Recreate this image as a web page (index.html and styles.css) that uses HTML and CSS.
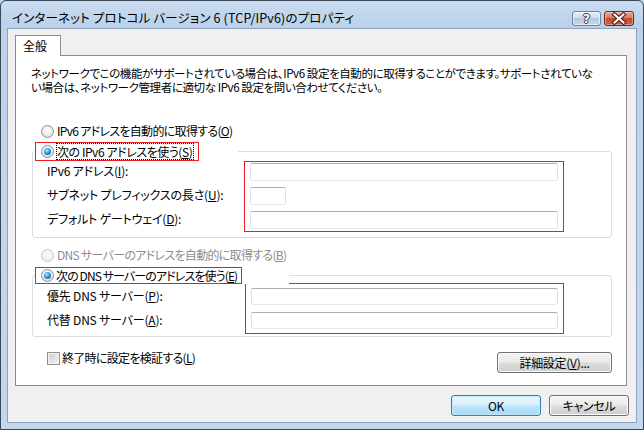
FILE: index.html
```html
<!DOCTYPE html>
<html lang="ja">
<head>
<meta charset="utf-8">
<title>IPv6 プロパティ</title>
<link rel="stylesheet" href="styles.css">
</head>
<body>
<div class="window">
  <div class="titlebar">
    <span class="title">インターネット プロトコル バージョン 6 (TCP/IPv6)のプロパティ</span>
    <div class="caption-btns">
      <div class="cbtn help"><span class="qmark">?</span></div>
      <div class="cbtn close">
        <svg width="28" height="13" viewBox="0 0 28 13">
          <path d="M9.5 2.5 L18.5 10.5 M18.5 2.5 L9.5 10.5" stroke="#4a1a12" stroke-width="4.2" stroke-linecap="square" fill="none"/>
          <path d="M9.5 2.5 L18.5 10.5 M18.5 2.5 L9.5 10.5" stroke="#ffffff" stroke-width="2.2" stroke-linecap="square" fill="none"/>
        </svg>
      </div>
    </div>
  </div>
  <div class="client">
    <div class="tabs"><div class="tab">全般</div></div>
    <div class="panel">
      <div class="desc">
        <div class="dline">ネットワークでこの機能がサポートされている場合は、IPv6 設定を自動的に取得することができます。サポートされていな</div>
        <div class="dline">い場合は、ネットワーク管理者に適切な IPv6 設定を問い合わせてください。</div>
      </div>

      <div class="radio-row"><span class="radio"></span><span class="rtext">IPv6 アドレスを自動的に取得する(<u>O</u>)</span></div>

      <div class="group g1">
        <div class="legend lg1"><span class="hl hl1"><span class="radio on"></span><span class="focus">次の IPv6 アドレスを使う(<u>S</u>)</span></span></div>
        <div class="grow">
          <div class="labels l1">
            <div class="lab">IPv6 アドレス(<u>I</u>):</div>
            <div class="lab">サブネット プレフィックスの長さ(<u>U</u>):</div>
            <div class="lab">デフォルト ゲートウェイ(<u>D</u>):</div>
          </div>
          <div class="redbox rb1">
            <div class="input wide"></div>
            <div class="input small"></div>
            <div class="input wide"></div>
          </div>
        </div>
      </div>

      <div class="radio-row dns-auto disabled"><span class="radio dis"></span><span class="rtext">DNS サーバーのアドレスを自動的に取得する(<u>B</u>)</span></div>

      <div class="group g2">
        <div class="legend lg2"><span class="hl hl2"><span class="radio on"></span><span class="rtext">次の DNS サーバーのアドレスを使う(<u>E</u>)</span></span></div>
        <div class="grow">
          <div class="labels l2">
            <div class="lab">優先 DNS サーバー(<u>P</u>):</div>
            <div class="lab">代替 DNS サーバー(<u>A</u>):</div>
          </div>
          <div class="redbox rb2">
            <div class="input wide2"></div>
            <div class="input wide2"></div>
          </div>
        </div>
      </div>

      <div class="bottom-row">
        <div class="check-wrap"><span class="checkbox"></span><span class="rtext">終了時に設定を検証する(<u>L</u>)</span></div>
        <button class="btn adv">詳細設定(<u>V</u>)...</button>
      </div>
    </div>
    <div class="footer">
      <button class="btn ok">OK</button>
      <button class="btn cancel">キャンセル</button>
    </div>
  </div>
</div>
</body>
</html>
```

FILE: styles.css
```css
html, body {
  margin: 0;
  padding: 0;
}
body {
  width: 644px;
  height: 430px;
  overflow: hidden;
  background: #bfd5ec;
  font-family: "Noto Sans CJK JP", "Noto Sans", sans-serif;
  font-size: 12px;
  color: #000;
  font-feature-settings: "palt" 1;
}
u { text-decoration: underline; text-underline-offset: 1px; }

.window {
  box-sizing: border-box;
  width: 644px;
  height: 430px;
  border: 1px solid #3b4656;
  border-radius: 6px 6px 0 0;
  background: linear-gradient(#c9dcf0 0px, #bad0e9 28px, #bdd4ec 40px, #c3d8ee 100%);
  display: flex;
  flex-direction: column;
}

.titlebar {
  height: 28px;
  display: flex;
  justify-content: space-between;
  align-items: flex-start;
  padding: 0 9px 0 11px;
}
.title {
  font-size: 12.5px;
  line-height: 16px;
  margin-top: 9px;
  color: #000;
  letter-spacing: 0.15px;
}
.caption-btns {
  display: flex;
  gap: 3px;
  margin-top: 10px;
}
.cbtn {
  box-sizing: border-box;
  height: 15px;
  border-radius: 3px;
  display: flex;
  align-items: center;
  justify-content: center;
}
.help {
  width: 29px;
  border: 1px solid #6f829c;
  background: linear-gradient(#e6eef8 0%, #cfdcec 45%, #b6c8de 50%, #c8d7ea 100%);
  box-shadow: inset 0 0 0 1px rgba(255,255,255,0.55);
}
.qmark {
  font-family: "DejaVu Sans", sans-serif;
  font-weight: bold;
  font-size: 12px;
  line-height: 12px;
  color: #fff;
  text-shadow: 1px 0 0 #2d3e55, -1px 0 0 #2d3e55, 0 1px 0 #2d3e55, 0 -1px 0 #2d3e55;
}
.close {
  width: 30px;
  border: 1px solid #6d2a1e;
  background: linear-gradient(#e9a898 0%, #d97a63 45%, #c44a2c 50%, #d0604a 100%);
  box-shadow: inset 0 0 0 1px rgba(255,220,210,0.45);
}
.close svg { display: block; }

.client {
  flex: 1;
  margin: 0 6px 6px 6px;
  border: 1px solid #8ea4bd;
  background: #f0f0f0;
  display: flex;
  flex-direction: column;
}

.tabs {
  display: flex;
  padding: 6px 0 0 7px;
}
.tab {
  position: relative;
  z-index: 1;
  box-sizing: border-box;
  width: 46px;
  height: 21px;
  margin-bottom: -1px;
  border: 1px solid #898c95;
  border-bottom: none;
  background: #fff;
  padding-left: 7px;
  line-height: 19px;
  font-size: 12px;
}

.panel {
  box-sizing: border-box;
  height: 331px;
  margin: 0 9px 0 7px;
  border: 1px solid #898c95;
  background: #fff;
  display: flex;
  flex-direction: column;
}

.desc {
  margin: 10px 0 0 15px;
  font-size: 11.5px;
  letter-spacing: -0.4px;
  white-space: nowrap;
}
.dline {
  height: 14px;
  line-height: 14px;
}

.radio-row {
  display: flex;
  align-items: center;
  height: 18px;
  margin-top: 28px;
  padding-left: 25px;
}
.radio-row .rtext { margin-left: 3px; }
.dns-auto { margin-top: 8px; }
.disabled .rtext { color: #8d8d8d; }

.rtext {
  line-height: 16px;
  white-space: nowrap;
  letter-spacing: -0.7px;
}

.radio {
  position: relative;
  flex: none;
  box-sizing: border-box;
  width: 13px;
  height: 13px;
  border-radius: 50%;
  border: 1px solid #8f8f8f;
  background: radial-gradient(circle at 50% 40%, #ffffff 0%, #f0f0f0 45%, #cfcfcf 100%);
}
.radio.on::after {
  content: "";
  position: absolute;
  left: 2px;
  top: 2px;
  width: 7px;
  height: 7px;
  border-radius: 50%;
  background: radial-gradient(circle at 40% 35%, #b9ecff 0%, #2a98e0 45%, #0c4f93 100%);
}
.radio.dis {
  border-color: #c4c4c4;
  background: radial-gradient(circle at 50% 40%, #fafafa, #ececec);
}

/* group box: the radio "legend" sits over the top border line */
.group {
  position: relative;
  margin: 0 14px 0 16px;
  border: 1px solid #d5dfe5;
  border-radius: 3px;
}
.g1 { margin-top: 11px; padding-bottom: 4px; }
.g2 { margin-top: 11px; padding-bottom: 2px; }

.legend {
  position: relative;
  z-index: 1;
  background: #fff;
  margin-left: 2px;
}
.lg1 { width: 203px; margin-top: -10px; }
.lg2 { width: 254px; margin-top: -9px; }

.hl {
  box-sizing: border-box;
  display: flex;
  align-items: center;
  border: 1px solid #ed1c24;
  padding-left: 5px;
  background: #fff;
}
.hl .rtext, .hl .focus { margin-left: 2px; }
.hl2 .rtext { letter-spacing: -0.9px; }
.hl1 { width: 164px; height: 19px; }
.hl2 { width: 207px; height: 17px; }
.focus {
  border: 1px dotted #000;
  line-height: 15px;
  padding: 0 1px 0 0;
  white-space: nowrap;
  letter-spacing: -0.45px;
}

.grow {
  display: flex;
  align-items: flex-start;
}
.labels {
  box-sizing: border-box;
  padding-left: 14px;
  display: flex;
  flex-direction: column;
}
.l1 { width: 211px; }
.l2 { width: 212px; padding-top: 3px; margin-top: -1px; }
.lab {
  height: 24px;
  line-height: 20px;
  white-space: nowrap;
  letter-spacing: -0.2px;
}

.redbox {
  box-sizing: border-box;
  border: 1px solid #ed1c24;
  display: flex;
  flex-direction: column;
}
.rb1 {
  width: 320px;
  padding: 1px 5px 2px 5px;
  gap: 6px;
}
.rb2 {
  width: 319px;
  margin-top: -1px;
  padding: 4px 5px 4px 5px;
  gap: 7px;
}
.input {
  box-sizing: border-box;
  height: 18px;
  border: 1px solid #dbdfe6;
  border-top-color: #abadb3;
  border-bottom-color: #e3e9ef;
  border-radius: 2px;
  background: #fff;
}
.wide { width: 308px; }
.small { width: 36px; }
.wide2 { width: 307px; height: 17px; }

.bottom-row {
  display: flex;
  justify-content: space-between;
  align-items: flex-start;
  margin: 13px 14px 0 31px;
}
.check-wrap {
  display: flex;
  align-items: center;
  height: 16px;
}
.check-wrap .rtext { margin-left: 2px; }
.checkbox {
  box-sizing: border-box;
  width: 13px;
  height: 13px;
  border: 1px solid #8f8f8f;
  background: linear-gradient(135deg, #d0d0d0, #f3f3f3);
  box-shadow: inset 0 0 0 1px #f4f4f4;
}

.btn {
  box-sizing: border-box;
  height: 21px;
  padding: 0;
  border: 1px solid #707070;
  border-radius: 3px;
  background: linear-gradient(#f3f3f3 0%, #ebebeb 48%, #dddddd 52%, #cfcfcf 100%);
  box-shadow: inset 0 0 0 1px #fbfbfb;
  font-family: "Noto Sans CJK JP", "Noto Sans", sans-serif;
  font-size: 12px;
  font-feature-settings: "palt" 1;
  color: #000;
  line-height: 18px;
  letter-spacing: -0.3px;
}
.adv { width: 115px; margin-top: 2px; }

.footer {
  display: flex;
  justify-content: flex-end;
  gap: 8px;
  padding: 9px 7px 6px 0;
}
.ok {
  width: 90px;
  border-color: #3c7fb1;
  background: linear-gradient(#eaf6fd 0%, #d9f0fc 48%, #bee6fd 52%, #a7d9f5 100%);
  box-shadow: inset 0 0 0 1px #bfe9fb;
}
.cancel { width: 80px; }
```
